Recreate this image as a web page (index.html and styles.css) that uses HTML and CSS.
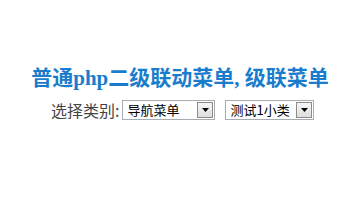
FILE: index.html
```html
<!DOCTYPE html>
<html>
<head>
<meta charset="utf-8">
<link rel="stylesheet" href="styles.css">
</head>
<body>
<div class="page">
  <h1 class="title">普通php二级联动菜单, 级联菜单</h1>
  <div class="row">
    <span class="label">选择类别:</span>
    <div class="select sel1">
      <span class="value">导航菜单</span>
      <span class="btn"><svg width="7" height="4" viewBox="0 0 7 4"><path d="M0 0H7L3.5 4Z" fill="#000"/></svg></span>
    </div>
    <div class="select sel2">
      <span class="value">测试1小类</span>
      <span class="btn"><svg width="7" height="4" viewBox="0 0 7 4"><path d="M0 0H7L3.5 4Z" fill="#000"/></svg></span>
    </div>
  </div>
</div>
</body>
</html>
```
FILE: styles.css
```css
html, body {
  margin: 0;
  padding: 0;
  background: #fff;
}
.page {
  width: 360px;
  height: 200px;
  padding-top: 66px;
  box-sizing: border-box;
}
.title {
  margin: 0;
  text-align: center;
  font-family: "Liberation Serif", "Noto Sans CJK SC", serif;
  font-weight: bold;
  font-size: 21px;
  line-height: 24px;
  color: #1a7ccc;
}
.row {
  display: flex;
  align-items: center;
  margin-top: 10px;
  padding-left: 51px;
}
.label {
  font-family: "Noto Sans CJK SC", sans-serif;
  font-size: 16px;
  color: #444;
  margin-right: 3px;
  line-height: 20px;
}
.select {
  display: flex;
  align-items: center;
  height: 20px;
  border: 1px solid #a5acb2;
  background: #fff;
  box-sizing: border-box;
  font-family: "Noto Sans CJK SC", sans-serif;
  font-size: 13px;
  color: #000;
}
.sel1 { width: 93px; }
.sel2 { width: 89px; margin-left: 10px; }
.value {
  flex: 1;
  padding-left: 4px;
  line-height: 18px;
  white-space: nowrap;
}
.btn {
  width: 16px;
  height: 16px;
  margin-right: 1px;
  border: 1px solid #8c8c8c;
  box-sizing: border-box;
  background: linear-gradient(#f6f6f6, #dedede);
  display: flex;
  align-items: center;
  justify-content: center;
}
```
